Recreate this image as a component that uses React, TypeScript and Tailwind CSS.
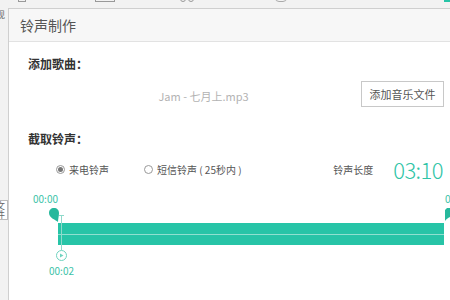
import React from 'react';

const FONT = { fontFamily: '"Noto Sans CJK SC", "Noto Sans", sans-serif' };

const App: React.FC = () => {
  return (
    <div className="w-[450px] h-[300px] bg-[#f2f2f2] overflow-hidden flex flex-col" style={FONT}>
      {/* Background window top strip */}
      <div className="h-[8px] shrink-0 flex items-end relative">
        <div className="absolute left-[18px] top-0 w-[8px] h-[2px] border-b border-x border-[#999]" />
        <div className="absolute left-[95px] top-0 w-[20px] h-[2px] border-b border-x border-[#999]" />
        <div className="absolute left-[180px] -top-[4px] w-[6px] h-[6px] rounded-full border border-[#999]" />
        <div className="absolute left-[188px] -top-[4px] w-[6px] h-[6px] rounded-full border border-[#999]" />
        <div className="absolute left-[275px] -top-[6px] w-[12px] h-[8px] rounded-full border border-[#aaa]" />
        <div className="absolute left-[444px] top-0 w-[6px] h-[2px] bg-[#27c4a7]" />
      </div>

      <div className="flex flex-1 min-h-0">
        {/* Background window left strip */}
        <div className="w-[8px] shrink-0 relative text-[9px] text-[#666] overflow-hidden">
          <span className="absolute -left-[4px] top-[2px] leading-none">现</span>
          <span className="absolute -left-[6px] top-[192px] leading-none border border-[#bbb] bg-white px-[1px]">文件</span>
        </div>

        {/* Dialog */}
        <div className="w-[460px] shrink-0 bg-white border-l border-t border-[#cfcfcf] flex flex-col">
          <div className="h-[33px] shrink-0 bg-[#f7f7f7] border-b border-[#e2e2e2] flex items-center pl-[11px]">
            <span className="text-[14px] text-[#555]">铃声制作</span>
          </div>

          <div className="pl-[19px] pr-[16px] flex flex-col">
            <div className="mt-[13px] h-[18px] flex items-center text-[12px] font-bold text-[#333]">添加歌曲：</div>

            <div className="mt-[8px] flex items-center w-[416px]">
              <div className="flex-1 flex justify-center pt-[4px] pl-[18px] text-[11px] text-[#b3b3b3]">Jam - 七月上.mp3</div>
              <div className="w-[83px] h-[26px] border border-[#c8c8c8] flex items-center justify-center text-[11px] text-[#555]">
                添加音乐文件
              </div>
            </div>

            <div className="mt-[23px] h-[18px] flex items-center text-[12px] font-bold text-[#333]">截取铃声：</div>

            <div className="mt-[12px] h-[18px] flex items-center w-[416px] text-[10px] text-[#555]">
              <div className="ml-[28px] flex items-center gap-[4px]">
                <span className="w-[9px] h-[9px] rounded-full border border-[#999] flex items-center justify-center">
                  <span className="w-[5px] h-[5px] rounded-full bg-[#777]" />
                </span>
                来电铃声
              </div>
              <div className="ml-[35px] flex items-center gap-[4px]">
                <span className="w-[9px] h-[9px] rounded-full border border-[#999]" />
                短信铃声 ( 25秒内 )
              </div>
              <div className="ml-auto mr-[20px]">铃声长度</div>
              <div className="text-[22px] font-light text-[#2fc4a6] leading-none tracking-tight mr-[1px]">03:10</div>
            </div>

            {/* Timeline */}
            <div className="relative mt-[10px] h-[100px] w-[440px] -ml-[19px]">
              <span className="absolute left-[24px] top-[6px] text-[10px] text-[#3cc3a8] leading-none">00:00</span>
              <span className="absolute left-[436px] top-[6px] text-[10px] text-[#3cc3a8] leading-none">0</span>
              {/* left drop marker */}
              <svg className="absolute left-[40px] top-[20px]" width="10" height="14" viewBox="0 0 10 14">
                <path d="M5 0 C8 0 10 2 10 5 C10 8 9 11 9 14 C7 12 0 10 0 5 C0 2 2 0 5 0 Z" fill="#26b89c" />
              </svg>
              {/* right marker */}
              <svg className="absolute left-[436px] top-[20px]" width="10" height="14" viewBox="0 0 10 14">
                <path d="M2 0 L10 0 L10 8 C6 8 2 10 0 13 L0 2 Z" fill="#26b89c" />
              </svg>
              {/* bar */}
              <div className="absolute left-[49px] top-[35px] w-[386px] h-[22px] bg-[#27c4a7] flex items-center">
                <div className="w-full h-[1px] bg-[#8fe0d0]" />
              </div>
              {/* playhead */}
              <div className="absolute left-[52px] top-[28px] w-[1px] h-[34px] bg-[#8fd9ca]" />
              <div className="absolute left-[50px] top-[27px] w-[5px] h-[1px] bg-[#8fd9ca]" />
              <div className="absolute left-[47px] top-[62px] w-[11px] h-[11px] rounded-full border border-[#6fd3bf] bg-white flex items-center justify-center">
                <svg width="5" height="5" viewBox="0 0 5 5">
                  <path d="M1 0.5 L4.5 2.5 L1 4.5 Z" fill="#6fd3bf" />
                </svg>
              </div>
              <span className="absolute left-[40px] top-[78px] text-[10px] text-[#3cc3a8] leading-none">00:02</span>
            </div>
          </div>
        </div>
      </div>
    </div>
  );
};

export default App;
